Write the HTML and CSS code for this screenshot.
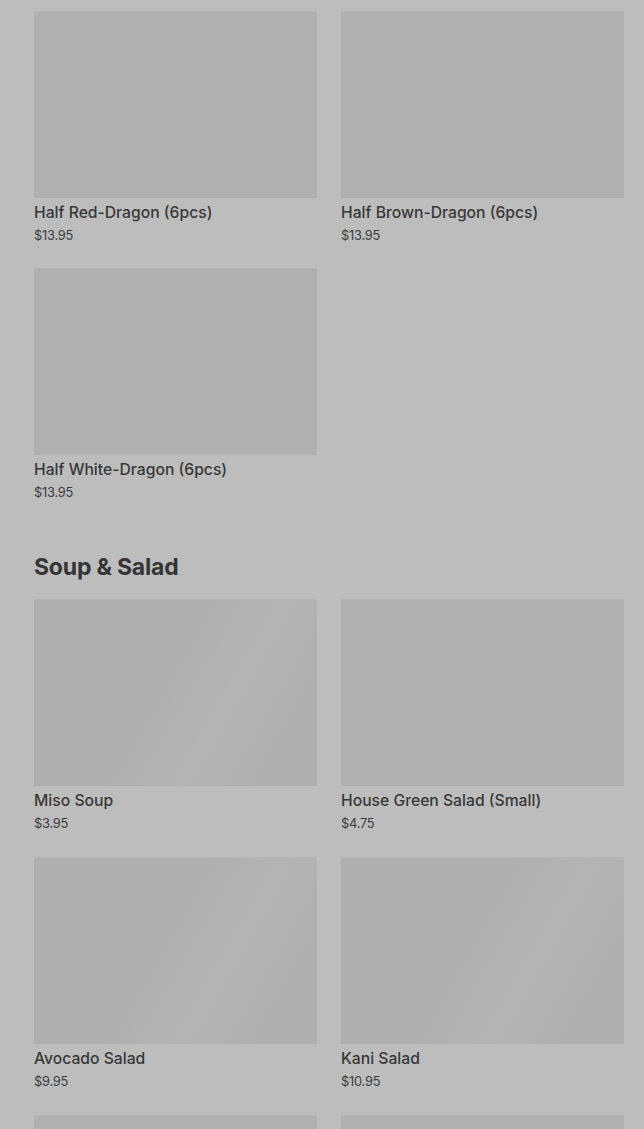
FILE: index.html
```html
<!DOCTYPE html>
<html lang="en">
<head>
    <meta charset="UTF-8">
    <meta name="viewport" content="width=device-width, initial-scale=1.0">
    <title>Menu</title>
    <link rel="stylesheet" href="styles.css">
</head>
<body>
    <div class="menu">
        <div class="grid">
            <div class="item">
                <div class="pic"></div>
                <div class="name">Half Red-Dragon (6pcs)</div>
                <div class="price">$13.95</div>
            </div>
            <div class="item">
                <div class="pic"></div>
                <div class="name">Half Brown-Dragon (6pcs)</div>
                <div class="price">$13.95</div>
            </div>
            <div class="item">
                <div class="pic"></div>
                <div class="name">Half White-Dragon (6pcs)</div>
                <div class="price">$13.95</div>
            </div>
        </div>

        <h2 class="section-title">Soup &amp; Salad</h2>
        <div class="grid soup">
            <div class="item">
                <div class="pic shine"></div>
                <div class="name">Miso Soup</div>
                <div class="price">$3.95</div>
            </div>
            <div class="item">
                <div class="pic"></div>
                <div class="name">House Green Salad (Small)</div>
                <div class="price">$4.75</div>
            </div>
            <div class="item">
                <div class="pic shine"></div>
                <div class="name">Avocado Salad</div>
                <div class="price">$9.95</div>
            </div>
            <div class="item">
                <div class="pic shine"></div>
                <div class="name">Kani Salad</div>
                <div class="price">$10.95</div>
            </div>
            <div class="item">
                <div class="pic"></div>
                <div class="name"></div>
                <div class="price"></div>
            </div>
            <div class="item">
                <div class="pic"></div>
                <div class="name"></div>
                <div class="price"></div>
            </div>
        </div>
    </div>
</body>
</html>
```

FILE: styles.css
```css
*{
    margin:0;
    padding:0;
    box-sizing:border-box;
}
html,body{
    background-color:#bdbdbd;
    height:100%;
    overflow:hidden;
}
body{
    font-family:Inter,"Liberation Sans",sans-serif;
    color:#383838;
}
.menu{
    padding:11px 20px 0 34px;
}
.grid{
    display:grid;
    grid-template-columns:1fr 1fr;
    column-gap:24px;
    row-gap:24px;
}
.grid.soup{
    row-gap:25px;
}
.pic{
    height:187px;
    background-color:#b0b0b0;
    border-top:1px solid #b5b5b5;
}
.pic.shine{
    background-image:linear-gradient(120deg,#afafaf 0%,#afafaf 45%,#b4b4b4 65%,#afafaf 85%);
}
.name{
    margin-top:5px;
    font-size:15.7px;
    font-weight:500;
    line-height:20px;
    height:20px;
}
.price{
    margin-top:5px;
    font-size:12.8px;
    line-height:16px;
    height:16px;
    color:#3c3c3c;
    letter-spacing:-0.2px;
}
.section-title{
    margin:52px 0 18px;
    font-size:23px;
    font-weight:700;
    line-height:28px;
    letter-spacing:-0.2px;
    color:#353535;
}
```
